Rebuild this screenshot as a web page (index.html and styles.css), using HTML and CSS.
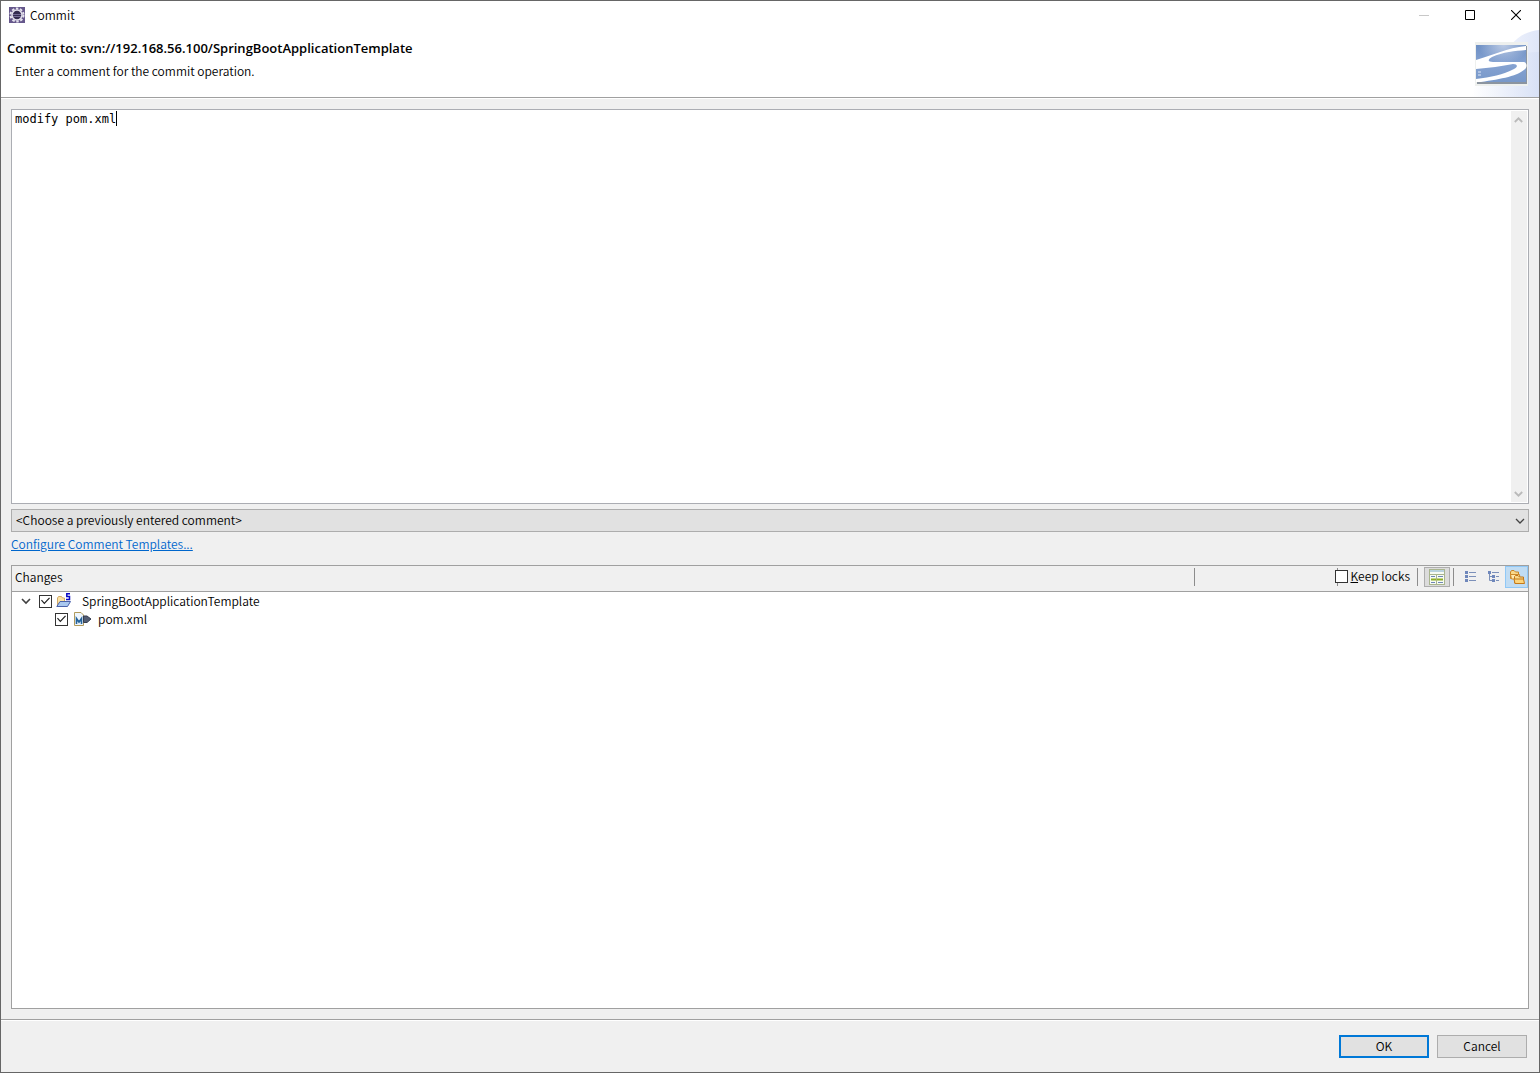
FILE: index.html
```html
<!DOCTYPE html>
<html lang="en">
<head>
<meta charset="utf-8">
<title>Commit</title>
<link rel="stylesheet" href="styles.css">
</head>
<body>
<div class="window">
  <header class="banner">
    <svg class="banner-glow" width="74" height="67" viewBox="0 0 74 67" aria-hidden="true">
      <defs>
        <linearGradient id="g1" x1="0" x2="1"><stop offset="0" stop-color="#fff"/><stop offset="1" stop-color="#dfe6f8"/></linearGradient>
        <linearGradient id="g2" x1="0" x2="1"><stop offset=".1" stop-color="#fff"/><stop offset="1" stop-color="#d3ddf4"/></linearGradient>
      </defs>
      <path d="M44 17C53 6 63 1 74 0V67H6C14 44 28 27 44 17Z" fill="url(#g1)"/>
      <path d="M0 67C18 38 42 22 74 22V67Z" fill="url(#g2)" opacity=".6"/>
    </svg>
    <div class="titlebar">
      <svg width="16" height="16" viewBox="0 0 16 16" aria-hidden="true">
        <rect width="16" height="16" fill="#65578b"/>
        <circle cx="8" cy="8" r="6.500" fill="none" stroke="#e6e3ee" stroke-width="2" stroke-dasharray="2.500 1.600"/>
        <circle cx="8" cy="8" r="5" fill="#342b50" stroke="#e3e0ec" stroke-width="1.500"/>
        <path d="M4 7.500h8M4 9.500h8" stroke="#756c97"/>
      </svg>
      <span class="title">Commit</span>
      <div class="controls">
        <button class="control" disabled aria-label="Minimize"><svg width="10" height="10" viewBox="0 0 10 10"><path d="M0 5.500H10" stroke="#c8c8c8"/></svg></button>
        <button class="control" aria-label="Maximize"><svg width="10" height="10" viewBox="0 0 10 10"><path d="M.5 .5H9.500V9.500H.5Z" fill="none" stroke="#000"/></svg></button>
        <button class="control" aria-label="Close"><svg width="10" height="10" viewBox="0 0 10 10"><path d="M0 0L10 10M10 0L0 10" stroke="#000" stroke-width="1.100"/></svg></button>
      </div>
    </div>
    <div class="intro">
      <div>
        <h1 class="heading">Commit to: svn://192.168.56.100/SpringBootApplicationTemplate</h1>
        <p class="hint">Enter a comment for the commit operation.</p>
      </div>
      <svg class="logo" width="53" height="44" viewBox="0 0 53 44" aria-hidden="true">
        <defs>
          <linearGradient id="g3" x1="0" y1="0" x2="0" y2="1"><stop offset="0" stop-color="#6d8fc4"/><stop offset=".5" stop-color="#86a3d2"/><stop offset="1" stop-color="#7898c9"/></linearGradient>
          <radialGradient id="g4" cx=".55" cy="0" r=".5"><stop offset="0" stop-color="#bccbe5"/><stop offset="1" stop-color="#bccbe5" stop-opacity="0"/></radialGradient>
        </defs>
        <rect width="53" height="44" fill="#eef0ee"/>
        <rect x="2" y="4" width="50" height="38" fill="#8b949f"/>
        <rect x="1" y="3" width="50" height="37" fill="url(#g3)"/>
        <rect x="1" y="3" width="50" height="37" fill="url(#g4)"/>
        <path d="M51 4C32 6 18 13 1 18V27C14 26 27 24 38 22C43 22 43 25 39 27C28 33 16 35 1 37V40H6C26 37 44 34 51 26C52 24 52 21 49 20H18C13 20 12 18 17 15C28 10 40 9 51 8Z" fill="#fff"/>
        <path d="M3 30h3M3 33h3" stroke="#dfe8f8"/>
      </svg>
    </div>
  </header>

  <main class="content">
    <div class="comment">
      <textarea class="comment-text" aria-label="Comment" spellcheck="false">modify pom.xml</textarea>
      <span class="caret"></span>
      <div class="scrollbar">
        <svg width="9" height="6" viewBox="0 0 9 6"><path d="M.8 5L4.500 1.300L8.200 5" fill="none" stroke="#bababa" stroke-width="1.800"/></svg>
        <svg width="9" height="6" viewBox="0 0 9 6"><path d="M.8 1L4.500 4.700L8.200 1" fill="none" stroke="#bababa" stroke-width="1.800"/></svg>
      </div>
    </div>
    <div class="combo">
      <select class="combo-select" aria-label="Previous comments"><option>&lt;Choose a previously entered comment&gt;</option></select>
      <svg class="combo-arrow" width="10" height="6" viewBox="0 0 10 6"><path d="M1 1L5 5L9 1" fill="none" stroke="#444" stroke-width="1.300"/></svg>
    </div>
    <a class="link" href="#">Configure Comment Templates...</a>

    <section class="changes">
      <div class="toolbar">
        <h2 class="changes-title">Changes</h2>
        <span class="divider"></span>
        <div class="tools">
          <label class="keep"><input class="check" type="checkbox"><span><u>K</u>eep locks</span></label>
          <span class="divider"></span>
          <button class="tool tool-on" aria-label="Show compare pane">
            <svg width="16" height="16" viewBox="0 0 16 16">
              <rect x=".5" y=".5" width="15" height="15" fill="#f7fbf5" stroke="#a9b58e"/>
              <path d="M1 2H15" stroke="#b9d2de" stroke-width="2"/>
              <path d="M1 5.500H15" stroke="#a9b58e"/>
              <path d="M7.500 6V15" stroke="#a9b58e"/>
              <path d="M2 7.500H6M9 7.500H14M2 13.500H6M9 13.500H14" stroke="#6f87b4"/>
              <path d="M2 10.500H7M8 10.500H14" stroke="#8fae25" stroke-width="2"/>
            </svg>
          </button>
          <span class="divider"></span>
          <button class="tool" aria-label="Flat view">
            <svg width="12" height="12" viewBox="0 0 12 12"><path d="M0 0h3v3H0zM0 4h3v3H0zM0 8h3v3H0z" fill="#6f87bb"/><path d="M4 1.500h7M4 5.500h7M4 9.500h7" stroke="#7c90b9"/></svg>
          </button>
          <button class="tool" aria-label="Tree view">
            <svg width="12" height="12" viewBox="0 0 12 12"><path d="M0 0h3v3H0zM4 4h3v3H4zM4 8h3v3H4z" fill="#6f87bb"/><path d="M4 1.500h7M8 5.500h3M8 9.500h3M1.500 3v6.500H4M1.500 5.500H4" fill="none" stroke="#7c90b9"/></svg>
          </button>
          <button class="tool tool-hot" aria-label="Compressed folders">
            <svg width="16" height="16" viewBox="0 0 16 16">
              <path d="M1.500 9.500V3L2.500 1.500H5L6.500 3H9.500V9.500Z" fill="#f9d88a" stroke="#c98425"/>
              <path d="M2.500 10L1.500 5.500H10.500L11 10Z" fill="#ffe9b0" stroke="#cd8b2d"/>
              <path d="M5.500 14V7.500L6.500 6.500H9L10.500 8H14.500V14Z" fill="#f9d88a" stroke="#c07518"/>
              <path d="M6 14.500L5 10H14.500L15.500 14.500Z" fill="#fdd57c" stroke="#c57a1a"/>
            </svg>
          </button>
        </div>
      </div>
      <ul class="tree">
        <li class="row">
          <svg class="twisty" width="10" height="7" viewBox="0 0 10 7"><path d="M1 1L5 5L9 1" fill="none" stroke="#404040" stroke-width="1.600"/></svg>
          <input class="check" type="checkbox" id="project" checked>
          <svg width="16" height="16" viewBox="0 0 16 16">
            <path d="M1.500 13V5L2.500 3.500H5.500L6.500 5H8.500V13Z" fill="#fbe3a6" stroke="#d3ab67"/>
            <path d="M.8 13.500L4 8.500H14.500L11.500 13.500Z" fill="#a9c8ef" stroke="#4a62aa"/>
            <path d="M14 .8H10.800V3.500H13.500V6.500H10" fill="none" stroke="#0a0ac4" stroke-width="1.500"/>
          </svg>
          <label class="name" for="project">SpringBootApplicationTemplate</label>
        </li>
        <li class="row row-child">
          <input class="check" type="checkbox" id="pom" checked>
          <svg width="18" height="16" viewBox="0 0 18 16">
            <path d="M.5 1.500H7L9.500 4V14.500H.5Z" fill="#eef6fd" stroke="#b19a5c"/>
            <path d="M2.500 13V7.500L5 11L7.500 7.500V13" fill="none" stroke="#24639b" stroke-width="1.600"/>
            <path d="M9.500 5H13L17 8L13 11.500H9.500Z" fill="#535d72" stroke="#353d50"/>
          </svg>
          <label class="name" for="pom">pom.xml</label>
        </li>
      </ul>
    </section>
  </main>

  <footer class="footer">
    <button class="button button-default">OK</button>
    <button class="button">Cancel</button>
  </footer>
</div>
</body>
</html>
```
FILE: styles.css
```css
* {
  box-sizing: border-box;
}

body {
  margin: 0;
  font-family: "Noto Sans CJK KR", "Noto Sans", sans-serif;
  font-size: 12px;
  font-weight: 350;
  line-height: 18px;
  color: #000;
}

button,
select {
  font: inherit;
  color: inherit;
}

svg {
  display: block;
  flex: none;
}

.window {
  display: flex;
  flex-direction: column;
  min-height: 100vh;
  border: 1px solid #666;
  background: #f0f0f0;
}

/* Title bar and banner */
.banner {
  position: relative;
  height: 97px;
  background: #fff;
  border-bottom: 1px solid #a0a0a0;
  box-shadow: 0 1px #fff;
}

.banner-glow {
  position: absolute;
  right: 0;
  bottom: 0;
}

.titlebar {
  display: flex;
  align-items: center;
  height: 28px;
  padding-left: 8px;
  gap: 5px;
}

.controls {
  display: flex;
  margin-left: auto;
}

.control {
  display: flex;
  align-items: center;
  justify-content: center;
  width: 46px;
  height: 28px;
  padding: 0;
  border: 0;
  background: none;
}

.intro {
  position: relative;
  display: flex;
  justify-content: space-between;
  padding: 10px 11px 0 6px;
}

.heading {
  margin: 0;
  font-family: "Open Sans", sans-serif;
  font-size: 13px;
  font-weight: 600;
  line-height: 18px;
}

.hint {
  margin: 5px 0 0 8px;
}

.logo {
  margin-top: 3px;
}

/* Body */
.content {
  display: flex;
  flex: 1;
  flex-direction: column;
  padding: 11px 10px 10px;
}

.comment {
  position: relative;
  display: flex;
  flex: 391 1 0;
  padding: 1px;
  border: 1px solid #abadb3;
  background: #fff;
}

.comment-text {
  flex: 1;
  padding: 0 2px;
  border: 0;
  outline: 0;
  resize: none;
  background: none;
  font-family: "DejaVu Sans Mono", monospace;
  font-size: 12px;
  line-height: 16px;
}

.caret {
  position: absolute;
  top: 1px;
  left: calc(3px + 14ch);
  width: 1px;
  height: 15px;
  background: #000;
  font-family: "DejaVu Sans Mono", monospace;
}

.scrollbar {
  display: flex;
  flex-direction: column;
  justify-content: space-between;
  align-items: center;
  width: 16px;
  padding: 6px 2px 5px 0;
  background: #f0f0f0;
}

.combo {
  position: relative;
  display: flex;
  margin-top: 5px;
}

.combo-select {
  flex: 1;
  height: 23px;
  padding: 0 4px 2px;
  border: 1px solid #adadad;
  border-radius: 0;
  background: #e1e1e1;
  appearance: none;
}

.combo-arrow {
  position: absolute;
  top: 9px;
  right: 4px;
  pointer-events: none;
}

.link {
  align-self: flex-start;
  margin-top: 3px;
  color: #0066cc;
}

.changes {
  display: flex;
  flex: 442 1 0;
  flex-direction: column;
  margin-top: 12px;
  border: 1px solid #a0a0a0;
  background: #fff;
}

.toolbar {
  display: flex;
  height: 26px;
  padding-left: 3px;
  border-bottom: 1px solid #a0a0a0;
  background: #f0f0f0;
}

.changes-title {
  flex: 1;
  margin: 0;
  font-size: 12px;
  font-weight: inherit;
  line-height: 22px;
}

.divider {
  width: 1px;
  height: 18px;
  margin-top: 2px;
  background: #8c8c8c;
}

.tools {
  display: flex;
  justify-content: flex-end;
  width: 333px;
}

.keep {
  display: flex;
  align-items: center;
  gap: 2px;
  height: 20px;
  margin-right: 7px;
  background: linear-gradient(#8c8c8c, #8c8c8c) 2px 2px / 1px 18px no-repeat;
}

.check {
  display: grid;
  place-items: center;
  flex: none;
  width: 13px;
  height: 13px;
  margin: 0;
  border: 1px solid #333;
  background: #fff;
  appearance: none;
}

.check:checked::before {
  content: "";
  width: 9px;
  height: 8px;
  background: #222;
  clip-path: polygon(0 45%, 10% 35%, 37% 68%, 90% 5%, 100% 15%, 37% 92%);
}

.tool {
  display: flex;
  align-items: center;
  justify-content: center;
  width: 23px;
  height: 22px;
  padding: 0;
  border: 1px solid transparent;
  background: none;
}

.tool-on {
  width: 26px;
  height: 20px;
  margin: 1px 3px 0 6px;
  border-color: #adadad;
  background: #dcdcdc;
}

.tool-on + .divider {
  margin-right: 5px;
}

.tool-hot {
  border-color: #90c8f6;
  background: #c0dcf3;
}

.tree {
  margin: 0;
  padding: 0;
  list-style: none;
}

.row {
  display: flex;
  align-items: center;
  height: 18px;
  padding-left: 9px;
}

.twisty {
  margin-right: 8px;
}

.row .check {
  margin-right: 4px;
}

.row-child {
  padding-left: 43px;
}

.row-child .check {
  margin-right: 6px;
}

.row .name {
  margin-left: 10px;
}

.row-child .name {
  margin-left: 6px;
}

/* Buttons */
.footer {
  display: flex;
  justify-content: flex-end;
  gap: 8px;
  padding: 15px 12px 14px;
  border-top: 1px solid #a0a0a0;
  box-shadow: inset 0 1px #fff;
}

.button {
  width: 90px;
  height: 23px;
  padding: 0 0 2px;
  border: 1px solid #adadad;
  background: #e1e1e1;
}

.button-default {
  border: 2px solid #0078d7;
}
```
